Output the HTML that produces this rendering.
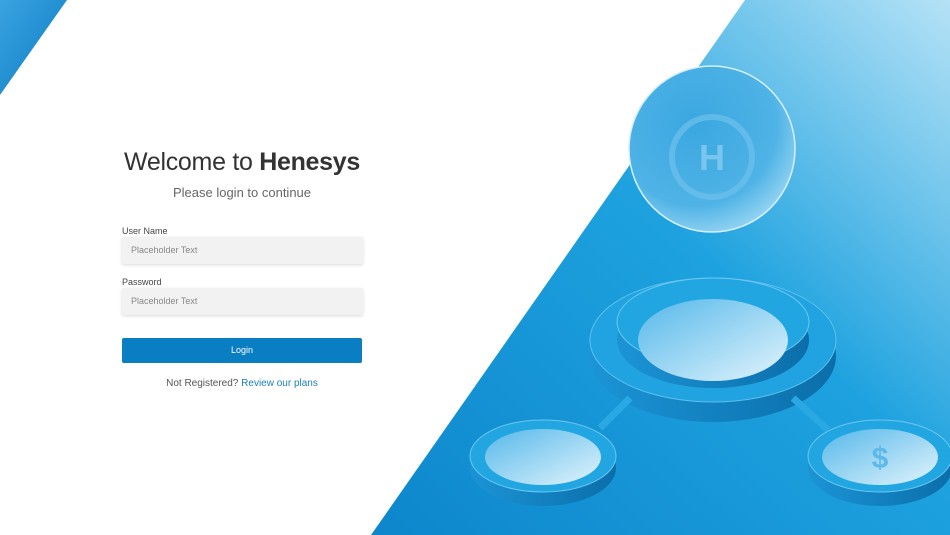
<!DOCTYPE html>
<html><head><style>
body{margin:0;width:950px;height:535px;overflow:hidden;background:#fff;font-family:"Liberation Sans",sans-serif;position:relative}
svg{position:absolute;left:0;top:0}
.t{position:absolute;left:122px;width:240px;text-align:center}
h1{position:absolute;left:110px;width:264px;top:148px;margin:0;font-weight:300;font-size:25px;color:#333;text-align:center;letter-spacing:-0.3px}
h1 b{font-weight:700}
.sub{top:185px;font-size:13px;color:#666}
.lab{position:absolute;left:122px;font-size:9px;color:#444}
.in{position:absolute;left:122px;width:241px;height:27px;background:#f2f2f2;box-shadow:0 1px 3px rgba(0,0,0,.15);border-radius:2px;font-size:9px;color:#888;line-height:27px;text-indent:9px}
.btn{position:absolute;left:122px;top:338px;width:240px;height:25px;background:#0a7ec2;color:#fff;font-size:9px;text-align:center;line-height:25px;border-radius:2px}
.reg{top:378px;font-size:10px;color:#555}
.reg span{color:#1a7fc1}
</style></head><body>
<svg width="950" height="535" viewBox="0 0 950 535">
<defs>
<linearGradient id="bg" x1="0" y1="1" x2="1" y2="0"><stop offset="0" stop-color="#0d86cc"/><stop offset=".55" stop-color="#1ea2df"/><stop offset="1" stop-color="#b5e2f6"/></linearGradient>
<radialGradient id="sp" cx=".4" cy=".35" r=".7"><stop offset="0" stop-color="#3aa7e0"/><stop offset=".7" stop-color="#4fb3e6"/><stop offset="1" stop-color="#9ad6f3"/></radialGradient>
<linearGradient id="lens" x1="0" y1="0" x2="1" y2="1"><stop offset="0" stop-color="#55b8ea"/><stop offset="1" stop-color="#e2f4fc"/></linearGradient>
<linearGradient id="rim" x1="0" y1="0" x2="1" y2="0"><stop offset="0" stop-color="#1b94d6"/><stop offset="1" stop-color="#0b6eaa"/></linearGradient>
<linearGradient id="tl" x1="0" y1="0" x2="1" y2="1"><stop offset="0" stop-color="#3aa3e0"/><stop offset="1" stop-color="#0b7cc4"/></linearGradient>
</defs>
<polygon points="0,0 67,0 0,95" fill="url(#tl)"/>
<polygon points="745,0 950,0 950,535 371,535" fill="url(#bg)"/>
<ellipse cx="713" cy="356" rx="123" ry="66" fill="url(#rim)"/>
<ellipse cx="713" cy="340" rx="123" ry="62" fill="#20a3e0" stroke="#5cc0ee" stroke-width="1"/>
<ellipse cx="713" cy="340" rx="96" ry="48" fill="url(#rim)"/>
<ellipse cx="713" cy="322" rx="96" ry="44" fill="#22a6e2" stroke="#6cc7ef"/>
<ellipse cx="713" cy="340" rx="75" ry="41" fill="url(#lens)"/>
<line x1="630" y1="398" x2="600" y2="428" stroke="#2aa8e3" stroke-width="7"/>
<line x1="793" y1="398" x2="828" y2="430" stroke="#2aa8e3" stroke-width="7"/>
<ellipse cx="543" cy="468" rx="73" ry="38" fill="url(#rim)"/>
<ellipse cx="543" cy="456" rx="73" ry="36" fill="#22a6e2" stroke="#6cc7ef"/>
<ellipse cx="543" cy="457" rx="58" ry="28" fill="url(#lens)"/>
<ellipse cx="880" cy="468" rx="72" ry="38" fill="url(#rim)"/>
<ellipse cx="880" cy="456" rx="72" ry="36" fill="#22a6e2" stroke="#6cc7ef"/>
<ellipse cx="880" cy="457" rx="58" ry="28" fill="url(#lens)"/>
<text x="880" y="468" font-size="30" font-weight="bold" fill="#5db9e8" text-anchor="middle" font-family="Liberation Sans">$</text>
<circle cx="712" cy="149" r="83" fill="url(#sp)" stroke="#d6effb" stroke-width="1.5"/>
<circle cx="712" cy="157" r="40" fill="none" stroke="#6ec1ec" stroke-width="6" opacity=".7"/>
<text x="712" y="170" font-size="36" font-weight="bold" fill="#78c6ee" text-anchor="middle" font-family="Liberation Sans">H</text>
</svg>
<h1>Welcome to <b>Henesys</b></h1>
<div class="t sub">Please login to continue</div>
<div class="lab" style="top:226px">User Name</div>
<div class="in" style="top:237px">Placeholder Text</div>
<div class="lab" style="top:277px">Password</div>
<div class="in" style="top:288px">Placeholder Text</div>
<div class="btn">Login</div>
<div class="t reg">Not Registered? <span>Review our plans</span></div>
</body></html>
